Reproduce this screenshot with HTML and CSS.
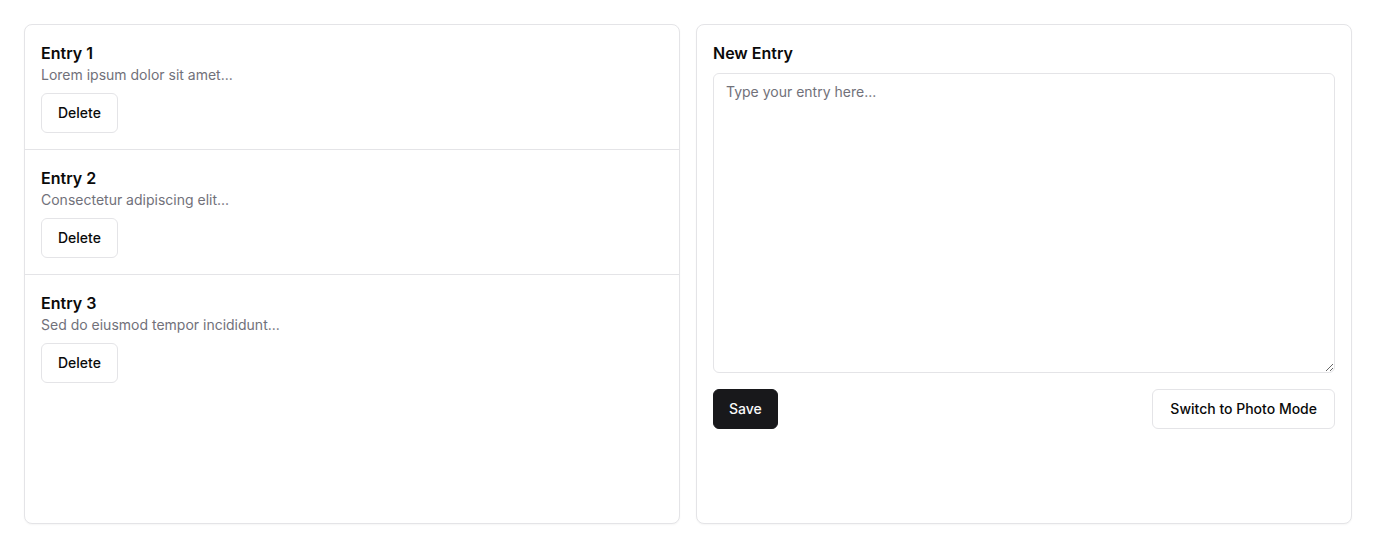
FILE: index.html
```html
<!DOCTYPE html>
<html lang="en">
<head>
<meta charset="utf-8">
<title>Journal</title>
<link rel="stylesheet" href="styles.css">
</head>
<body>
<div class="page">
  <section class="card list">
    <div class="entry">
      <h3 class="entry-title">Entry 1</h3>
      <p class="entry-text">Lorem ipsum dolor sit amet...</p>
      <button class="btn btn-outline">Delete</button>
    </div>
    <div class="entry">
      <h3 class="entry-title">Entry 2</h3>
      <p class="entry-text">Consectetur adipiscing elit...</p>
      <button class="btn btn-outline">Delete</button>
    </div>
    <div class="entry">
      <h3 class="entry-title">Entry 3</h3>
      <p class="entry-text">Sed do eiusmod tempor incididunt...</p>
      <button class="btn btn-outline">Delete</button>
    </div>
  </section>
  <section class="card editor">
    <h3 class="entry-title">New Entry</h3>
    <textarea class="textarea" placeholder="Type your entry here..."></textarea>
    <div class="actions">
      <button class="btn btn-primary">Save</button>
      <button class="btn btn-outline btn-wide">Switch to Photo Mode</button>
    </div>
  </section>
</div>
</body>
</html>
```
FILE: styles.css
```css
* { box-sizing: border-box; }
html, body { margin: 0; padding: 0; background: #ffffff; }
body {
  font-family: Inter, "Liberation Sans", sans-serif;
  color: #0a0a0a;
}
.page {
  display: grid;
  grid-template-columns: 1fr 1fr;
  gap: 16px;
  padding: 24px;
}
.card {
  height: 500px;
  border: 1px solid #e4e4e7;
  border-radius: 8px;
  background: #fff;
  box-shadow: 0 1px 2px rgba(0,0,0,0.04);
  overflow: hidden;
}
.entry {
  padding: 16px;
  border-bottom: 1px solid #e4e4e7;
}
.entry:last-child { border-bottom: none; }
.entry-title {
  margin: 0;
  font-size: 16px;
  line-height: 24px;
  font-weight: 600;
}
.entry-text {
  margin: 0;
  font-size: 14px;
  line-height: 20px;
  color: #71717a;
}
.btn {
  font-family: inherit;
  font-size: 14px;
  font-weight: 500;
  height: 40px;
  padding: 0 16px 2px;
  border-radius: 6px;
  cursor: pointer;
}
.btn-outline {
  background: #fff;
  color: #0a0a0a;
  border: 1px solid #e4e4e7;
}
.btn-wide { padding: 0 17px 2px; }
.entry .btn { margin-top: 8px; }
.btn-primary {
  background: #18181b;
  color: #fafafa;
  border: 1px solid #18181b;
  padding: 0 15px 2px;
}
.editor {
  padding: 16px;
  display: flex;
  flex-direction: column;
}
.textarea {
  margin-top: 8px;
  height: 300px;
  width: 100%;
  border: 1px solid #e4e4e7;
  border-radius: 6px;
  padding: 8px 12px;
  font-family: inherit;
  font-size: 14px;
  line-height: 20px;
  color: #0a0a0a;
  resize: vertical;
}
.textarea::placeholder { color: #71717a; }
.actions {
  margin-top: 16px;
  display: flex;
  justify-content: space-between;
}
```
